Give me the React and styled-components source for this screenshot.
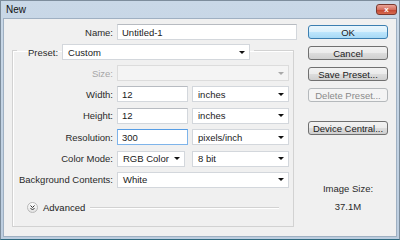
import styled, { createGlobalStyle } from "styled-components";

const Global = createGlobalStyle`
  html, body { margin: 0; padding: 0; background: #f0f0f0; }
  body {
    font-family: "Liberation Sans", Arial, sans-serif;
    font-size: 9.5px;
    color: #222;
  }
`;

const Window = styled.div`
  width: 400px;
  height: 240px;
  box-sizing: border-box;
  display: flex;
  flex-direction: column;
  background: linear-gradient(#c9d8e7, #bccddf);
  border: 1px solid #7d8d9c;
  border-bottom-color: #2f6a80;
  padding: 0 2px 2px 2px;
`;

const TitleBar = styled.div`
  height: 17px;
  display: flex;
  align-items: flex-start;
  justify-content: space-between;
  padding-left: 3px;
`;

const Title = styled.span`
  margin-top: 3px;
  font-size: 10px;
  color: #111;
`;

const CloseBtn = styled.div`
  width: 21px;
  height: 11px;
  margin-top: 3px;
  box-sizing: border-box;
  border: 1px solid #7b3a30;
  border-radius: 3px;
  background: linear-gradient(#eaa497, #d5705f 50%, #c2442f 51%, #d66a4f);
  color: #fff;
  font-weight: bold;
  font-size: 8px;
  line-height: 9px;
  text-align: center;
`;

const Body = styled.div`
  flex: 1;
  display: flex;
  background: #f0f0f0;
  border: 1px solid #9fb0c2;
  padding: 5px 0 0 8px;
`;

const LeftCol = styled.div`
  width: 285px;
  display: flex;
  flex-direction: column;
`;

const NameRow = styled.div`
  display: grid;
  grid-template-columns: 101px 180px;
  column-gap: 4px;
  align-items: center;
  height: 16px;
`;

const Label = styled.label`
  text-align: right;
  white-space: nowrap;
  color: ${(p) => (p.$disabled ? "#a6a6a6" : "#2a2a2a")};
`;

const TextBox = styled.input`
  box-sizing: border-box;
  width: ${(p) => p.$w || "100%"};
  height: 16px;
  margin: 0;
  padding: 0 0 0 4px;
  border: 1px solid ${(p) => (p.$focused ? "#7eb4ea" : "#d3d7dc")};
  border-top-color: ${(p) => (p.$focused ? "#569de5" : "#b7bbc1")};
  background: #fff;
  font: inherit;
  color: #1a1a1a;
  outline: none;
`;

const Drop = styled.div`
  box-sizing: border-box;
  width: ${(p) => p.$w || "auto"};
  flex: ${(p) => (p.$w ? "none" : "1")};
  height: 16px;
  display: flex;
  align-items: center;
  justify-content: space-between;
  padding: 0 4px 0 5px;
  border: 1px solid ${(p) => (p.$disabled ? "#dcdcdc" : "#d3d7dc")};
  background: ${(p) => (p.$disabled ? "#f4f4f4" : "#fff")};
  color: #1a1a1a;
`;

const Arrow = styled.span`
  width: 0;
  height: 0;
  border-left: 3px solid transparent;
  border-right: 3px solid transparent;
  border-top: 3px solid ${(p) => (p.$disabled ? "#a9a9a9" : "#111")};
`;

const Group = styled.fieldset`
  box-sizing: border-box;
  width: 282px;
  margin: 0;
  min-width: 0;
  padding: 5px 4px 11px 0;
  border: 1px solid #d2d2d2;
  box-shadow: inset 1px 1px 0 #fff;
`;

const Legend = styled.legend`
  margin-left: 4px;
  padding: 4px 4px 0 11px;
`;

const LegendInner = styled.div`
  display: flex;
  align-items: center;
  gap: 4px;
`;

const Rows = styled.div`
  display: grid;
  grid-template-columns: 100px 172px;
  column-gap: 4px;
  row-gap: 5.4px;
  align-items: center;
`;

const Pair = styled.div`
  display: flex;
  justify-content: space-between;
  align-items: center;
`;

const AdvancedRow = styled.div`
  height: 14px;
  margin-top: 13px;
  display: flex;
  align-items: center;
  padding-left: 14px;
`;

const AdvIcon = styled.span`
  width: 11px;
  height: 11px;
  box-sizing: border-box;
  border-radius: 50%;
  border: 1px solid #b9b9b9;
  background: linear-gradient(#ffffff, #e2e2e2);
  display: flex;
  align-items: center;
  justify-content: center;
  margin-right: 5px;
`;

const Rule = styled.div`
  flex: 1;
  height: 0;
  border-top: 1px solid #d2d2d2;
  border-bottom: 1px solid #fff;
  margin: 0 10px 0 5px;
`;

const RightCol = styled.div`
  width: 80px;
  margin-left: 11px;
  padding-top: 1px;
  display: flex;
  flex-direction: column;
  gap: 7px;
`;

const Button = styled.div`
  box-sizing: border-box;
  height: 14px;
  margin-top: ${(p) => p.$mt || "0"};
  border-radius: 3px;
  border: 1px solid
    ${(p) => (p.$primary ? "#3c7fb1" : p.$disabled ? "#b5b9bc" : "#707070")};
  background: ${(p) =>
    p.$primary
      ? "linear-gradient(#eaf6fd, #d9f0fc 50%, #bee6fd 51%, #a7d9f5)"
      : p.$disabled
      ? "#f4f4f4"
      : "linear-gradient(#f2f2f2, #ebebeb 50%, #dddddd 51%, #cfcfcf)"};
  color: ${(p) => (p.$disabled ? "#8a8a8a" : "#1a1a1a")};
  display: flex;
  align-items: center;
  justify-content: center;
  white-space: nowrap;
`;

const Info = styled.div`
  margin-top: ${(p) => p.$mt};
  line-height: 12px;
  text-align: center;
  color: #2a2a2a;
`;

function Select({ value, w, disabled }) {
  return (
    <Drop $w={w} $disabled={disabled}>
      <span>{value}</span>
      <Arrow $disabled={disabled} />
    </Drop>
  );
}

export default function App() {
  return (
    <Window>
      <Global />
      <TitleBar>
        <Title>New</Title>
        <CloseBtn>x</CloseBtn>
      </TitleBar>
      <Body>
        <LeftCol>
          <NameRow>
            <Label>Name:</Label>
            <TextBox defaultValue="Untitled-1" readOnly />
          </NameRow>
          <Group>
            <Legend>
              <LegendInner>
                <Label>Preset:</Label>
                <Select value="Custom" w="188px" />
              </LegendInner>
            </Legend>
            <Rows>
              <Label $disabled>Size:</Label>
              <Select value="" disabled />
              <Label>Width:</Label>
              <Pair>
                <TextBox $w="71px" defaultValue="12" readOnly />
                <Select value="inches" w="97px" />
              </Pair>
              <Label>Height:</Label>
              <Pair>
                <TextBox $w="71px" defaultValue="12" readOnly />
                <Select value="inches" w="97px" />
              </Pair>
              <Label>Resolution:</Label>
              <Pair>
                <TextBox $w="71px" $focused defaultValue="300" readOnly />
                <Select value="pixels/inch" w="97px" />
              </Pair>
              <Label>Color Mode:</Label>
              <Pair>
                <Select value="RGB Color" w="68px" />
                <Select value="8 bit" w="97px" />
              </Pair>
              <Label>Background Contents:</Label>
              <Select value="White" />
            </Rows>
            <AdvancedRow>
              <AdvIcon>
                <svg width="5" height="6" viewBox="0 0 5 6">
                  <path d="M0.5 0.5 L2.5 2.5 L4.5 0.5 M0.5 3 L2.5 5 L4.5 3" fill="none" stroke="#333" strokeWidth="1" />
                </svg>
              </AdvIcon>
              <span>Advanced</span>
              <Rule />
            </AdvancedRow>
          </Group>
        </LeftCol>
        <RightCol>
          <Button $primary>OK</Button>
          <Button>Cancel</Button>
          <Button>Save Preset...</Button>
          <Button $disabled>Delete Preset...</Button>
          <Button $mt="12px">Device Central...</Button>
          <Info $mt="41px">Image Size:</Info>
          <Info $mt="-1px">37.1M</Info>
        </RightCol>
      </Body>
    </Window>
  );
}
